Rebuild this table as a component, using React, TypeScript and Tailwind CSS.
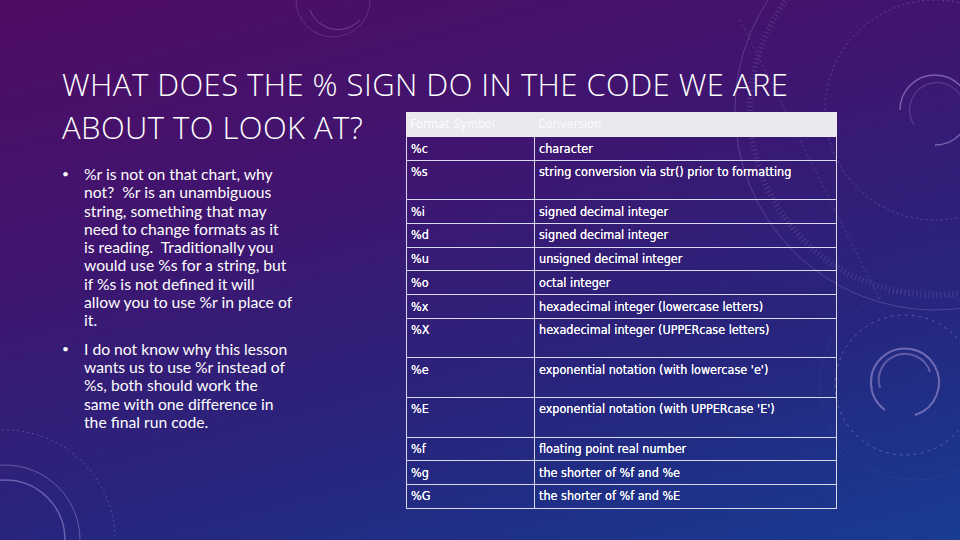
import React from "react";

const rows: { s: string; c: string; d?: boolean }[] = [
  { s: "%c", c: "character" },
  { s: "%s", c: "string conversion via str() prior to formatting", d: true },
  { s: "%i", c: "signed decimal integer" },
  { s: "%d", c: "signed decimal integer" },
  { s: "%u", c: "unsigned decimal integer" },
  { s: "%o", c: "octal integer" },
  { s: "%x", c: "hexadecimal integer (lowercase letters)" },
  { s: "%X", c: "hexadecimal integer (UPPERcase letters)", d: true },
  { s: "%e", c: "exponential notation (with lowercase 'e')", d: true },
  { s: "%E", c: "exponential notation (with UPPERcase 'E')", d: true },
  { s: "%f", c: "floating point real number" },
  { s: "%g", c: "the shorter of %f and %e" },
  { s: "%G", c: "the shorter of %f and %E" },
];

const bullet1 = [
  "%r is not on that chart, why",
  "not?\u00a0 %r is an unambiguous",
  "string, something that may",
  "need to change formats as it",
  "is reading.\u00a0 Traditionally you",
  "would use %s for a string, but",
  "if %s is not defined it will",
  "allow you to use %r in place of",
  "it.",
];
const bullet2 = [
  "I do not know why this lesson",
  "wants us to use %r instead of",
  "%s, both should work the",
  "same with one difference in",
  "the final run code.",
];

function Decor() {
  return (
    <svg className="absolute inset-0 pointer-events-none" width="960" height="540" viewBox="0 0 960 540">
      <g fill="none" stroke="#b9a8e6" strokeOpacity="0.35">
        <circle cx="935" cy="110" r="200" strokeOpacity="0.25" />
        <circle cx="935" cy="110" r="185" strokeWidth="6" strokeDasharray="1 3" strokeOpacity="0.2" />
        <circle cx="935" cy="110" r="110" strokeDasharray="2 3" strokeOpacity="0.3" />
        <path d="M 900 110 A 35 35 0 1 1 935 145" strokeWidth="1.5" strokeOpacity="0.5" />
        <path d="M 914 125 A 25 25 0 0 1 960 95" strokeOpacity="0.3" />
        <line x1="740" y1="20" x2="880" y2="300" strokeDasharray="2 3" strokeOpacity="0.25" />
        <circle cx="905" cy="385" r="70" strokeDasharray="3 4" strokeOpacity="0.35" />
        <path d="M 885 410 A 34 34 0 1 1 915 415" strokeWidth="2" strokeOpacity="0.5" />
        <path d="M 880 388 A 26 26 0 0 1 930 372" strokeWidth="2" strokeOpacity="0.4" />
        <circle cx="915" cy="385" r="95" strokeDasharray="1 3" strokeOpacity="0.25" />
        <circle cx="5" cy="540" r="75" strokeOpacity="0.4" />
        <circle cx="5" cy="540" r="60" strokeWidth="1.5" strokeOpacity="0.45" />
        <circle cx="5" cy="540" r="110" strokeDasharray="2 3" strokeOpacity="0.3" />
        <path d="M 310 10 A 30 30 0 0 0 360 20" strokeOpacity="0.35" />
        <circle cx="333" cy="0" r="37" strokeOpacity="0.2" />
      </g>
    </svg>
  );
}

export default function App() {
  return (
    <div className="relative w-[960px] h-[540px] overflow-hidden bg-[linear-gradient(165deg,#500c63_0%,#3f1570_35%,#26267e_70%,#173c92_100%)]">
      <Decor />
      <div className="relative flex flex-col pl-[62px] pt-[63px]">
        <h1
          className="text-white text-[31px] font-light leading-[43px] tracking-[0.45px]"
          style={{ fontFamily: "'Open Sans', sans-serif" }}
        >
          WHAT DOES THE % SIGN DO IN THE CODE WE ARE
          <br />
          ABOUT TO LOOK AT?
        </h1>
        <ul
          className="mt-[16px] text-white text-[15.7px] leading-[18.3px] flex flex-col gap-[10px]"
          style={{ fontFamily: "Lato, 'Liberation Sans', sans-serif" }}
        >
          {[bullet1, bullet2].map((lines, i) => (
            <li key={i} className="flex">
              <span className="w-[22px] shrink-0 text-[12px]">•</span>
              <span className="flex flex-col whitespace-nowrap">
                {lines.map((l) => (
                  <span key={l}>{l}</span>
                ))}
              </span>
            </li>
          ))}
        </ul>
      </div>
      <table
        className="absolute left-[406px] top-[112px] w-[431px] border-collapse text-white text-[12.5px] [text-shadow:0_0_0.5px_#ffffff]"
        style={{ fontFamily: "'DejaVu Sans Condensed', 'DejaVu Sans', sans-serif" }}
      >
        <thead>
          <tr className="h-[24px] bg-[#e9e9ee]">
            <th className="w-[128px] border border-[#e9e9ee] text-left font-normal text-[#fbfbff] pl-[3px] align-middle [text-shadow:none]">
              Format Symbol
            </th>
            <th className="border border-[#e9e9ee] text-left font-normal text-[#fbfbff] pl-[3px] align-middle [text-shadow:none]">
              Conversion
            </th>
          </tr>
        </thead>
        <tbody>
          {rows.map((r) => (
            <tr key={r.s} className={r.d ? "h-[39.6px]" : "h-[23.7px]"}>
              <td className="border border-[#d8d8ee] pl-[4px] align-top pt-[2.5px]">{r.s}</td>
              <td className="border border-[#d8d8ee] pl-[4px] align-top pt-[2.5px]">{r.c}</td>
            </tr>
          ))}
        </tbody>
      </table>
    </div>
  );
}
